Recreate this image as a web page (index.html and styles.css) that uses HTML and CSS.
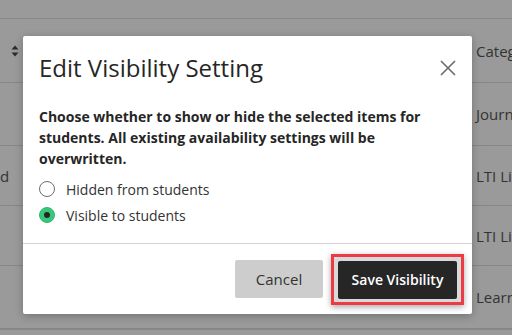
FILE: index.html
```html
<!DOCTYPE html>
<html lang="en">
<head>
    <meta charset="UTF-8">
    <meta name="viewport" content="width=device-width, initial-scale=1.0">
    <title>Edit Visibility Setting</title>
    <link rel="stylesheet" href="styles.css">
</head>
<body>

    <div class="table">
        <div class="row top"></div>
        <div class="row header">
            <div class="lead">
                <svg class="sort" width="8" height="12" viewBox="0 0 8 12">
                    <path d="M4 0.5 L7.5 4.5 L0.5 4.5 Z M4 11.5 L7.5 7.5 L0.5 7.5 Z" fill="#2b2b2b"/>
                </svg>
            </div>
            <div></div>
            <div class="cell">Category</div>
        </div>
        <div class="row r1">
            <div class="lead"></div>
            <div></div>
            <div class="cell">Journal</div>
        </div>
        <div class="row r2">
            <div class="lead"><span class="cut">d</span></div>
            <div></div>
            <div class="cell">LTI Link</div>
        </div>
        <div class="row r3">
            <div class="lead"></div>
            <div></div>
            <div class="cell">LTI Link</div>
        </div>
        <div class="row r4">
            <div class="lead"></div>
            <div></div>
            <div class="cell">Learning Module</div>
        </div>
        <div class="row"></div>
    </div>

    <div class="modal">
        <div class="modalhead">
            <h2>Edit Visibility Setting</h2>
            <button class="close" aria-label="Close">
                <svg width="16" height="16" viewBox="0 0 16 16">
                    <path d="M1 1 L15 15 M15 1 L1 15" stroke="#6a6a6a" stroke-width="1.6" fill="none"/>
                </svg>
            </button>
        </div>

        <div class="modalbody">
            <p class="intro">Choose whether to show or hide the selected items for students. All existing availability settings will be overwritten.</p>

            <label class="option">
                <input type="radio" name="visibility">
                <span class="dot"></span>
                Hidden from students
            </label>
            <label class="option">
                <input type="radio" name="visibility" checked>
                <span class="dot"></span>
                Visible to students
            </label>
        </div>

        <div class="modalfoot">
            <button class="btn cancel">Cancel</button>
            <span class="highlight">
                <button class="btn save">Save Visibility</button>
            </span>
        </div>
    </div>

</body>
</html>
```

FILE: styles.css
```css
* {
    font-family: 'Open Sans', sans-serif;
    box-sizing: border-box;
    margin: 0;
}

body {
    background-color: #9a9a9a;
    color: #333;
    height: 100vh;
    overflow: hidden;
}

/* greyed out table behind the dialog */

.table {
    display: flex;
    flex-direction: column;
}

.row {
    display: grid;
    grid-template-columns: 24px 1fr 39px;
    align-items: center;
    border-bottom: 1px solid #878787;
    white-space: nowrap;
    overflow: hidden;
}

.top {
    height: 19px;
}

.header {
    height: 64px;
}

.r1 {
    height: 63px;
}

.r2 {
    height: 60px;
}

.r3 {
    height: 60px;
}

.r4 {
    height: 63px;
}

.lead {
    display: flex;
    align-items: center;
}

.sort {
    margin-left: 11px;
}

.cut {
    font-size: 15px;
    color: #333;
}

.cell {
    font-size: 15px;
    color: #333;
    padding-left: 3px;
    overflow: hidden;
}

/* dialog */

.modal {
    position: absolute;
    left: 23px;
    top: 36px;
    width: 449px;
    height: 278px;
    background-color: #fff;
    border-radius: 2px;
    box-shadow: 0 2px 8px rgba(0, 0, 0, 0.25);
    display: flex;
    flex-direction: column;
}

.modalhead {
    display: flex;
    align-items: center;
    justify-content: space-between;
    padding: 17px 16px 0 16px;
}

.modalhead h2 {
    font-size: 24px;
    font-weight: 400;
    line-height: 30px;
    color: #262626;
}

.close {
    background: none;
    border: none;
    padding: 0;
    width: 16px;
    height: 16px;
    cursor: pointer;
}

.close svg {
    display: block;
}

.modalbody {
    padding: 23px 16px 0 16px;
}

.intro {
    font-size: 14px;
    font-weight: 700;
    line-height: 21px;
    color: #262626;
    margin-bottom: 7px;
}

.option {
    display: flex;
    align-items: center;
    gap: 11px;
    height: 26px;
    font-size: 14px;
    color: #333;
    cursor: pointer;
}

.option input {
    display: none;
}

.dot {
    width: 16px;
    height: 16px;
    border-radius: 50%;
    border: 1px solid #6e6e6e;
    background-color: #fff;
    display: flex;
    align-items: center;
    justify-content: center;
}

.option input:checked + .dot {
    background-color: #37c87c;
    border-color: #2fb86f;
}

.option input:checked + .dot::after {
    content: "";
    width: 6px;
    height: 6px;
    border-radius: 50%;
    background-color: #262626;
}

.modalfoot {
    margin-top: auto;
    height: 71px;
    border-top: 1px solid #d2d2d2;
    display: flex;
    align-items: center;
    justify-content: flex-end;
    gap: 8px;
    padding-right: 8px;
}

.btn {
    height: 38px;
    border: none;
    border-radius: 2px;
    font-size: 15px;
    cursor: pointer;
}

.cancel {
    width: 88px;
    background-color: #cdcdcd;
    color: #333;
}

.save {
    width: 119px;
    background-color: #262626;
    color: #fff;
    font-size: 14px;
    font-weight: 600;
    display: block;
}

.highlight {
    display: block;
    border: 3px solid #ec3b44;
    padding: 4px 4px 3px 4px;
    background-color: #d9d9d9;
    box-shadow: 0 2px 6px rgba(0, 0, 0, 0.35);
}
```
